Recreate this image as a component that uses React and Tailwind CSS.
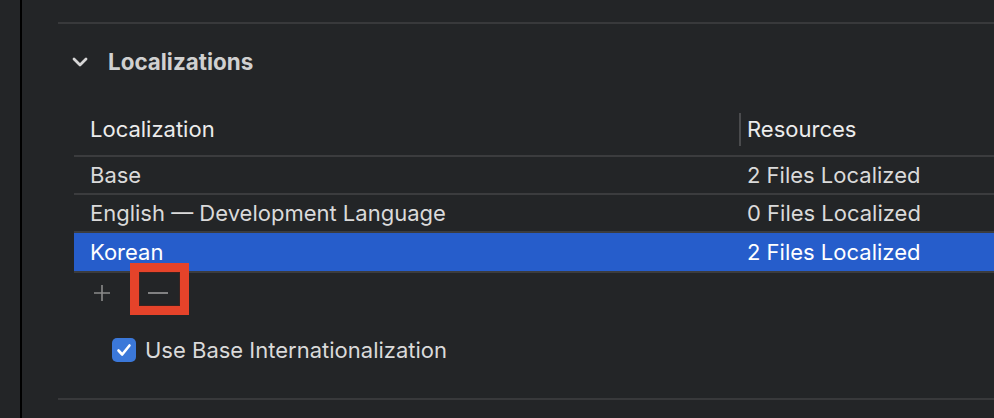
import React from 'react';

const rows = [
  { name: 'Base', res: '2 Files Localized' },
  { name: 'English — Development Language', res: '0 Files Localized' },
  { name: 'Korean', res: '2 Files Localized', selected: true },
];

export default function App() {
  return (
    <div
      className="w-[994px] h-[418px] bg-[#232527] flex overflow-hidden"
      style={{ fontFamily: 'Inter, "Noto Sans", sans-serif' }}
    >
      <div className="w-[20px] shrink-0" />
      <div className="w-[2px] shrink-0 bg-black" />
      <div className="flex-1 flex flex-col relative">
        <div className="h-[22px] shrink-0" />
        <div className="ml-[36px] h-[2px] shrink-0 bg-[#38393b]" />

        {/* section header */}
        <div className="h-[76px] shrink-0 flex items-center pl-[50px] pb-[1px]">
          <svg width="16" height="10" viewBox="0 0 16 10" className="mr-[20px] mt-[1px]">
            <path d="M2 2 L8 8 L14 2" fill="none" stroke="#d6d6d6" strokeWidth="2.8" strokeLinecap="round" strokeLinejoin="round" />
          </svg>
          <span className="text-[22.4px] font-bold text-[#d0d0d0]">Localizations</span>
        </div>

        {/* table */}
        <div className="ml-[52px] shrink-0">
          <div className="h-[57px] flex items-center border-b-2 border-[#3b3c3e] pt-[4px]">
            <div className="w-[665px] pl-[16px] text-[22px] text-[#ececec]">Localization</div>
            <div className="w-[2px] h-[33px] bg-[#4a4b4d]" />
            <div className="pl-[6px] text-[22px] text-[#ececec]">Resources</div>
          </div>
          {rows.map((r) => (
            <div
              key={r.name}
              className={
                r.selected
                  ? 'h-[40px] flex items-center bg-[#265dcb] border-b-2 border-[#3b3c3e] text-white'
                  : 'h-[38px] flex items-center border-b-2 border-[#3b3c3e] text-[#dadada]'
              }
            >
              <div className="w-[667px] pl-[16px] text-[22px]">{r.name}</div>
              <div className="pl-[6px] text-[22px]">{r.res}</div>
            </div>
          ))}
        </div>

        {/* add / remove */}
        <div className="h-[40px] shrink-0 flex items-center pl-[71px] relative">
          <svg width="18" height="18" viewBox="0 0 18 18">
            <path d="M9 1 V17 M1 9 H17" stroke="#8a8a8a" strokeWidth="1.6" />
          </svg>
          <svg width="22" height="18" viewBox="0 0 22 18" className="ml-[36px]">
            <path d="M1 9 H21" stroke="#9a9a9a" strokeWidth="1.6" />
          </svg>
          <div className="absolute left-[108px] top-[-10px] w-[59px] h-[52px] border-[9px] border-[#e5432a]">
            <div className="w-full h-full border border-[#3a2320]" />
          </div>
        </div>

        {/* checkbox */}
        <div className="h-[74px] shrink-0 flex items-center pl-[90px]">
          <div className="w-[24px] h-[24px] rounded-[5px] bg-[#3b78d9] flex items-center justify-center">
            <svg width="16" height="14" viewBox="0 0 16 14">
              <path d="M2.5 7.5 L6.2 11.5 L13.5 2.5" fill="none" stroke="white" strokeWidth="2.6" strokeLinecap="round" strokeLinejoin="round" />
            </svg>
          </div>
          <span className="ml-[9px] text-[22px] text-[#dadada]">Use Base Internationalization</span>
        </div>

        <div className="ml-[36px] h-[2px] shrink-0 bg-[#38393b] mt-[11px]" />
      </div>
    </div>
  );
}
